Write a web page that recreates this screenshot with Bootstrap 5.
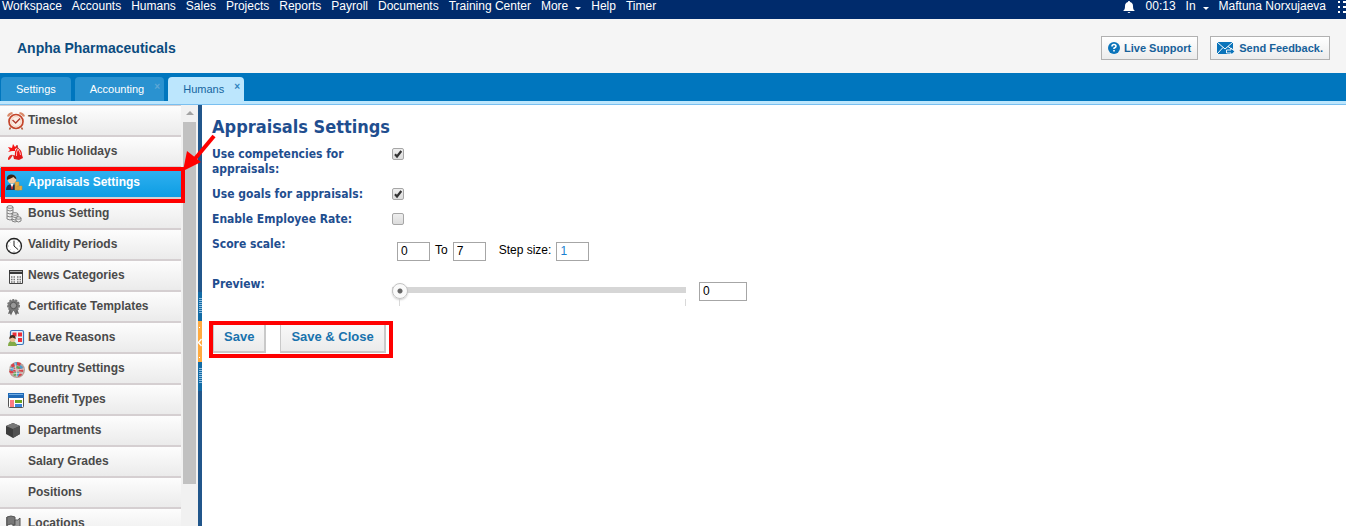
<!DOCTYPE html>
<html lang="en">
<head>
<meta charset="utf-8">
<meta name="viewport" content="width=device-width, initial-scale=1">
<title>Appraisals Settings</title>
<link rel="stylesheet" href="https://cdn.jsdelivr.net/npm/bootstrap@5.3.0/dist/css/bootstrap.min.css">
<style>
  body { font: 12px/14px "Liberation Sans", Arial, sans-serif; color: #000; }
  a { text-decoration: none; color: inherit; }
  .topbar { background: #002b6c; color: #fff; height: 19px; line-height: 13px; padding-left: 2px; }
  .nav-gap { gap: 10px; }
  .caret { display: inline-block; border: 3px solid transparent; border-top-color: #fff; border-bottom: 0; margin-left: 7px; vertical-align: 0; }
  .company-bar { background: #f5f5f5; height: 54px; padding: 4px 16px 0 17px; gap: 12px; }
  .company-title { font-size: 14px; line-height: 16px; font-weight: 700; color: #0b4c80; }
  .help-btn { height: 24px; border: 1px solid #b1b1b1; background: linear-gradient(#fff, #ececec); color: #17619a; font: 700 11px/14px "Liberation Sans", Arial, sans-serif; padding: 0 6px; gap: 4px; }
  .tabs { background: #0076be; height: 28px; padding-left: 1px; gap: 4px; }
  .tab { background: #2a92d0; color: #fff; height: 24px; border-radius: 4px 4px 0 0; font-size: 11px; line-height: 25px; padding: 0 15px; }
  .tab.with-close { padding-right: 20px; }
  .tab.current { background: #bce6fd; color: #1565a0; }
  .tab-x { right: 4px; top: 6px; line-height: 8px; font-size: 10px; padding: 0; border: 0; background: none; color: #5ea8d6; font-weight: 700; }
  .tab.current .tab-x { color: #2f83bd; }
  .tab-edge { height: 4px; background: #bce6fd; border-bottom: 1px solid #79bff0; }
  .side { width: 181px; border-top: 1px solid #d5cfd1; }
  .side-item { height: 31px; border-bottom: 2px solid #d5cfd1; background: linear-gradient(#fdfdfd, #ebebeb); color: #4a4a4a; font-weight: 700; padding: 0 0 2px 5px; gap: 3px; }
  .side-item svg { width: 20px; height: 20px; flex: none; margin-top: 3px; }
  .side-item.chosen { background: linear-gradient(#33b2f1, #0d9de3); color: #fff; }
  .hilite { border: 4px solid #f00; pointer-events: none; }
  .side-hilite { inset: -1px -4px -6px 1px; z-index: 3; }
  .track { width: 17px; background: #f1f1f1; padding: 0 2px; }
  .track-up { height: 17px; padding: 6px 3px; }
  .track-up::before { content: ""; display: block; border: 4px solid transparent; border-top: 0; border-bottom-color: #a3a3a3; }
  .thumb { height: 362px; background: #c1c1c1; }
  .splitter { width: 4px; background: #21568b; padding-top: 187px; }
  .split-part { height: 29px; background: repeating-linear-gradient(#8ebde0 0 1px, #126ba5 1px 2px) no-repeat 1px 6px / 3px 16px #126ba5; }
  .split-toggle { height: 41px; background: #ffab40; border: 0; padding: 0; width: 4px; }
  .content { padding: 11px 10px; }
  .content h1, .field-name { font-family: "DejaVu Sans Condensed", "DejaVu Sans", sans-serif; font-weight: 700; color: #1f4e8f; }
  .content h1 { font-size: 18px; line-height: 22px; margin: 0 0 9px; }
  .field-name { font-size: 12px; line-height: 15px; width: 180px; flex: none; padding-right: 20px; }
  .field { margin-bottom: 10px; }
  .tick { appearance: none; width: 12px; height: 12px; margin: 1px 0 0; border: 1px solid #a6a6a6; border-radius: 2px; background: linear-gradient(#eee, #dcdcdc); }
  .tick:checked { background: url("data:image/svg+xml,%3Csvg xmlns='http://www.w3.org/2000/svg' viewBox='0 0 10 10'%3E%3Cpath d='M2 5.300 4 7.500 8.300 2' fill='none' stroke='%23333' stroke-width='2.200'/%3E%3C/svg%3E"), linear-gradient(#eee, #dcdcdc); }
  .num { width: 33px; height: 19px; border: 1px solid #a6a6a6; padding: 0 3px 1px; border-radius: 0; font: inherit; color: #000; }
  .num.wide { width: 48px; }
  .num.blue { color: #1a7fd0; }
  .scale-row { padding: 5px 0 0 5px; gap: 5px; line-height: 13px; }
  .scale-row label { padding-bottom: 2px; }
  .step-name { margin-left: 8px; }
  .preview-row { padding-top: 5px; gap: 13px; }
  .range-box { width: 294px; }
  .range { appearance: none; display: block; width: 100%; height: 17px; margin: 0; background: linear-gradient(#d6d6d6, #d6d6d6) no-repeat 0 5px / 100% 6px; }
  .range::-webkit-slider-thumb { appearance: none; width: 16px; height: 16px; border-radius: 50%; border: 1px solid #c3c3c3; background: radial-gradient(circle, #666 0 2px, #fafafa 3px); box-shadow: 0 1px 2px #ccc; }
  .range-ends { height: 7px; margin: 0 0 0 7px; border: solid #d9d9d9; border-width: 0 1px; }
  .actions { margin: 15px 0 0 -3px; width: 184px; height: 37px; gap: 14px; border: 4px solid #f00; }
  .save-btn { height: 28px; border: 1px solid #c9c9c9; border-width: 0 2px 2px 1px; background: linear-gradient(#f8f8f8, #ebebeb); color: #1872ad; font: 700 13px/14px "Liberation Sans", Arial, sans-serif; padding: 0 10px 3px; white-space: nowrap; }
  .pointer { left: 180px; top: 27px; z-index: 4; pointer-events: none; }
</style>
</head>
<body>
<div class="vh-100 d-flex flex-column overflow-hidden">
  <nav class="topbar d-flex nav-gap flex-shrink-0 text-nowrap overflow-hidden">
    <a href="#">Workspace</a><a href="#">Accounts</a><a href="#">Humans</a><a href="#">Sales</a><a href="#">Projects</a><a href="#">Reports</a><a href="#">Payroll</a><a href="#">Documents</a><a href="#">Training Center</a><a href="#">More<span class="caret"></span></a><a href="#">Help</a><a href="#">Timer</a>
    <svg class="ms-auto" width="14" height="14" viewBox="0 0 14 14" fill="#fff"><path d="M7 1c.8 0 1 .5 1 1 2 .5 3 2 3 4 0 3 .6 4 2 5H1c1.400-1 2-2 2-5 0-2 1-3.500 3-4 0-.5.2-1 1-1ZM5.500 12h3q-1.500 2-3 0Z"/></svg>
    <span>00:13</span><a href="#">In<span class="caret"></span></a><a href="#">Maftuna Norxujaeva</a>
    <svg width="10" height="13" viewBox="0 0 10 13" fill="#fff"><path d="M2 1h2v2H2zM7 1h3v2H7zM2 6h2v2H2zM7 6h3v2H7zM2 11h2v2H2zM7 11h3v2H7z"/></svg>
  </nav>

  <header class="company-bar d-flex align-items-center flex-shrink-0">
    <div class="company-title me-auto">Anpha Pharmaceuticals</div>
    <button type="button" class="help-btn d-flex align-items-center">
      <svg width="12" height="12" viewBox="0 0 12 12"><circle cx="6" cy="6" r="6" fill="#0b74ba"/><path d="M4 4.500Q4 2.500 6 2.500T8 4.300Q8 5.300 6 6.200V7" fill="none" stroke="#fff" stroke-width="1.600"/><path d="M5.200 8h1.600v1.600H5.200z" fill="#fff"/></svg>
      Live Support
    </button>
    <button type="button" class="help-btn d-flex align-items-center">
      <svg width="18" height="13" viewBox="0 0 18 13"><path d="M0 0h16v12H0z" fill="#0b74ba"/><path d="m0 0 8 7 8-7M0 12l6-6.500M16 8l-5-3.500" fill="none" stroke="#fff"/><path d="M9.500 8H14V6l4 3.500-4 3.500v-2H9.500z" fill="#0b74ba" stroke="#fff" stroke-width=".9"/></svg>
      Send Feedback.
    </button>
  </header>

  <div class="tabs d-flex align-items-end flex-shrink-0">
    <a class="tab" href="#">Settings</a>
    <div class="tab with-close position-relative"><a href="#">Accounting</a><button type="button" class="tab-x position-absolute" aria-label="Close Accounting">×</button></div>
    <div class="tab with-close current position-relative"><a href="#">Humans</a><button type="button" class="tab-x position-absolute" aria-label="Close Humans">×</button></div>
  </div>
  <div class="tab-edge flex-shrink-0"></div>

  <div class="d-flex flex-fill overflow-hidden position-relative">
    <nav class="side flex-shrink-0">
      <a class="side-item d-flex align-items-center" href="#"><svg viewBox="0 0 20 20"><path d="M3 5.500q1-3 4.500-3.500M14.500 2Q18 2.500 19 5.500" fill="none" stroke="#d98a6a" stroke-width="2.200"/><path d="m5.500 16.500-1 2m12-2 1 2" stroke="#b0502e" stroke-width="1.600"/><circle cx="11" cy="10.500" r="7" fill="#fbeee6" stroke="#c4452b" stroke-width="1.700"/><circle cx="11" cy="10.500" r="5" fill="none" stroke="#efc9b8" stroke-width=".8"/><path d="m7.500 9 3.200 3L15 7.500" fill="none" stroke="#b0392c" stroke-width="1.400"/></svg>Timeslot</a>
      <a class="side-item d-flex align-items-center" href="#"><svg viewBox="0 0 20 20"><path d="m3 5 4 1 1-4 2 3 2-2v3l-2 1v2L7 9l-4 1 2-2z" fill="#f81414"/><path d="M3 16q2-4 5-3l-2 3q-1 2-3 2z" fill="#e82a24"/><path d="M10 14q-1-6 3-8 4 2 4 7l-3 2z" fill="#ef1515"/><path d="m8 13 4 1 5-1 1 3-4 2-5-1z" fill="#e01717"/><path d="M13 7q-2 3-1.500 7M13 7q2.500 3 2.500 6" fill="none" stroke="#fff" stroke-width=".7"/><path d="m12 3 1 4" stroke="#a33"/></svg>Public Holidays</a>
      <a class="side-item chosen d-flex align-items-center position-relative" href="#"><svg viewBox="0 0 20 20"><path d="M1 17q0-6 6-6t6 6z" fill="#17304f"/><circle cx="7" cy="6.500" r="4.300" fill="#f3c79e"/><path d="M2 7q-1-5 4-5.500 5 0 5.500 5-2-1.500-3-2.500Q5 6 2 7Z" fill="#3c2514"/><path d="m5.500 11 1.500 5 1.500-5z" fill="#fff"/><path d="m7 12-1 3 1 2 1-2z" fill="#c22"/><g fill="#f2bd4c" stroke="#c08a35" stroke-width=".6"><path d="M10 9h4v8h-4zM12 13h5v4h-5z"/><path d="M10 11h4m-4 2h4m-4 2h7"/></g></svg>Appraisals Settings<span class="hilite side-hilite position-absolute"></span></a>
      <a class="side-item d-flex align-items-center" href="#"><svg viewBox="0 0 20 20" fill="#eee" stroke="#777" stroke-width=".9"><path d="M2 3v12q3 2 6 0V3M2 6q3 2 6 0M2 9q3 2 6 0M2 12q3 2 6 0"/><ellipse cx="5" cy="3" rx="3" ry="1.300"/><path d="M7 10v7q3 2 6 0v-7M7 12.500q3 2 6 0M7 15q3 2 6 0"/><ellipse cx="10" cy="10" rx="3" ry="1.300"/><path d="M11 14v3q2.500 2 5 0v-3"/><ellipse cx="13.500" cy="14" rx="2.500" ry="1.200"/></svg>Bonus Setting</a>
      <a class="side-item d-flex align-items-center" href="#"><svg viewBox="0 0 20 20"><circle cx="9" cy="11" r="7.500" fill="#fff" stroke="#222" stroke-width="1.300"/><path d="M9 6v5l4 3.500" fill="none" stroke="#222"/><path d="M9 4.500v1m0 11v1M2.500 11h1m11 0h1M4.500 6.500l.7.7m8.300 7.600.7.7M13.500 6.500l-.7.7M4.500 15.500l.7-.7" stroke="#555"/></svg>Validity Periods</a>
      <a class="side-item d-flex align-items-center" href="#"><svg viewBox="0 0 20 20"><path d="M4.500 4.500h13v13h-13z" fill="#f4f4f4" stroke="#444"/><path d="M4 4h14v4H4z" fill="#383838"/><path d="M5 5.500h12" stroke="#aaa"/><path d="M6 11h4m2 0h4M6 13.500h4m2 0h4M6 16h4m2 0h4" stroke="#777" stroke-width="1.300" stroke-dasharray="1.500 1"/></svg>News Categories</a>
      <a class="side-item d-flex align-items-center" href="#"><svg viewBox="0 0 20 20"><path d="m5 11-2 6 2-.5 1 2L8.500 13l2.500 5.500 1-2 2 .5-2-6z" fill="#666"/><circle cx="8.500" cy="8.500" r="5.500" fill="#777" stroke="#777" stroke-width="2" stroke-dasharray="2 1"/><circle cx="8.500" cy="8.500" r="3.200" fill="#999" stroke="#555"/></svg>Certificate Templates</a>
      <a class="side-item d-flex align-items-center" href="#"><svg viewBox="0 0 20 20"><rect x="5.500" y="2.500" width="13" height="14" rx="1.500" fill="#e5f2fc" stroke="#3e78ba" stroke-width="1.200"/><path d="M7.500 4.500h4v4h-4zM13 4.500h4v4h-4zM13 10h4v4h-4z" fill="#ee3038"/><path d="M3 18q0-5 4-5t5 5z" fill="#83aa46"/><circle cx="7.500" cy="11" r="3" fill="#eec298"/><path d="M4.300 11q0-4 3.200-4t3.200 4L7.500 9.500z" fill="#422c1d"/></svg>Leave Reasons</a>
      <a class="side-item d-flex align-items-center" href="#"><svg viewBox="0 0 20 20"><circle cx="12" cy="11" r="8" fill="#b8a29a"/><path d="m6 6 3-2 1 3-3 2zM12 3l4 1-1 3-3-1zM4 12l3-1 2 3-3 2zM14 9l4 1v3l-4-1zM9 9l3 1-1 3-3-1zM13 15l3-1 1 2-4 2z" fill="#da4149"/><path d="m9 4 3-1v3l-2 1zM5 9l3-1 1 3-3 1zM15 6l3 2-1 2-3-1zM11 14l3-1v3l-2 2z" fill="#4b9bcc"/><path d="m12 7 3 1-1 2-3-1zM8 14l3-1 1 3-3 1z" fill="#58a854"/><path d="m4 9 8 2 7-1M10 4l2 14M5 15l13-1" fill="none" stroke="#eee" stroke-width=".7"/></svg>Country Settings</a>
      <a class="side-item d-flex align-items-center" href="#"><svg viewBox="0 0 20 20"><rect x="3.500" y="3.500" width="15" height="14" rx="1" fill="#fff" stroke="#555"/><path d="M3 3h16v5H3z" fill="#1f69b6"/><path d="M4 4.500h14" stroke="#6eabe4"/><path d="M5 10h4v7H5z" fill="#ff7b83"/><path d="M10 10h7v3h-7z" fill="#6fa521"/><path d="M10 14h7v3h-7z" fill="#3b83d9"/></svg>Benefit Types</a>
      <a class="side-item d-flex align-items-center" href="#"><svg viewBox="0 0 20 20"><path d="m1 5 7-3 7 3v8l-7 4-7-4z" fill="#3d3d3d"/><path d="m1 5 7-3 7 3-7 3z" fill="#777"/><path d="m8 8 7-3v8l-7 4z" fill="#525252"/></svg>Departments</a>
      <a class="side-item d-flex align-items-center" href="#"><svg viewBox="0 0 20 20"></svg>Salary Grades</a>
      <a class="side-item d-flex align-items-center" href="#"><svg viewBox="0 0 20 20"></svg>Positions</a>
      <a class="side-item d-flex align-items-center" href="#"><svg viewBox="0 0 20 20"><path d="M2 3v15" stroke="#555" stroke-width="1.500"/><path d="M2 3q4-2 8 0v8q-4-2-8 0z" fill="#777" stroke="#555"/><path d="M10 6q3 1 5-2v8q-2 3-7 1v-2h2z" fill="#999" stroke="#555"/></svg>Locations</a>
    </nav>
    <div class="track flex-shrink-0"><div class="track-up"></div><div class="thumb"></div></div>
    <div class="splitter d-flex flex-column flex-shrink-0">
      <div class="split-part"></div>
      <button type="button" class="split-toggle d-flex align-items-center" aria-label="Collapse menu"><svg width="4" height="40" viewBox="0 0 4 40"><path d="m3.500 17-3 3.500 3 3.500" fill="none" stroke="#fff" stroke-width="1.300"/><path d="M1 5h1v1H1zM1 35h1v1H1z" fill="#fff"/></svg></button>
      <div class="split-part"></div>
    </div>

    <main class="content flex-fill">
      <h1>Appraisals Settings</h1>
      <form>
        <div class="field d-flex align-items-start"><label class="field-name" for="competencies">Use competencies for appraisals:</label><input class="tick" type="checkbox" id="competencies" checked></div>
        <div class="field d-flex align-items-start"><label class="field-name" for="goals">Use goals for appraisals:</label><input class="tick" type="checkbox" id="goals" checked></div>
        <div class="field d-flex align-items-start"><label class="field-name" for="rate">Enable Employee Rate:</label><input class="tick" type="checkbox" id="rate"></div>
        <div class="field d-flex align-items-start mb-3"><label class="field-name" for="from">Score scale:</label>
          <div class="scale-row d-flex align-items-center">
            <input class="num" type="text" id="from" value="0"><label for="to">To</label><input class="num" type="text" id="to" value="7">
            <label class="step-name" for="step">Step size:</label><input class="num blue" type="text" id="step" value="1">
          </div>
        </div>
        <div class="d-flex align-items-start"><label class="field-name" for="preview">Preview:</label>
          <div class="preview-row d-flex align-items-start">
            <div class="range-box flex-shrink-0"><input class="range" type="range" id="preview" min="0" max="7" value="0"><div class="range-ends"></div></div>
            <input class="num wide" type="text" value="0" aria-label="Preview value">
          </div>
        </div>
        <div class="actions d-flex"><button type="button" class="save-btn">Save</button><button type="button" class="save-btn">Save &amp; Close</button></div>
      </form>
    </main>
    <svg class="pointer position-absolute" width="40" height="44" viewBox="0 0 40 44"><path d="M34 4 14 28" stroke="#f00" stroke-width="4"/><path d="m3 39 4-20 14 11z" fill="#f00"/></svg>
  </div>
</div>
<script src="https://cdn.jsdelivr.net/npm/bootstrap@5.3.0/dist/js/bootstrap.bundle.min.js"></script>
</body>
</html>
